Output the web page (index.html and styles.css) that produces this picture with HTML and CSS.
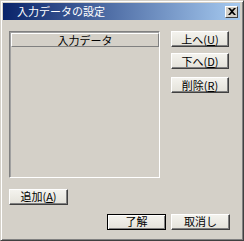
FILE: index.html
```html
<!DOCTYPE html>
<html lang="ja">
<head>
    <meta charset="UTF-8">
    <title>入力データの設定</title>
    <link rel="stylesheet" href="styles.css">
</head>
<body>
    <div class="window">
        <div class="titlebar">
            <span class="title">入力データの設定</span>
            <span class="close-btn">
                <svg width="8" height="7" viewBox="0 0 8 7">
                    <path d="M0 0h2l2 2 2-2h2L5 3.5 8 7H6L4 5 2 7H0l3-3.5z" fill="#000"/>
                </svg>
            </span>
        </div>

        <div class="content">
            <div class="main-row">
                <div class="listbox">
                    <div class="list-header">入力データ</div>
                    <div class="list-body"></div>
                </div>
                <div class="side-buttons">
                    <button class="btn">上へ(<u>U</u>)</button>
                    <button class="btn">下へ(<u>D</u>)</button>
                    <button class="btn btn-gap">削除(<u>R</u>)</button>
                </div>
            </div>

            <div class="add-row">
                <button class="btn">追加(<u>A</u>)</button>
            </div>

            <div class="footer">
                <button class="btn default">了解</button>
                <button class="btn">取消し</button>
            </div>
        </div>
    </div>
</body>
</html>
```

FILE: styles.css
```css
body {
    margin: 0;
    padding: 0;
    background: #d4d0c8;
    font-family: "Noto Sans CJK JP", "Liberation Sans", sans-serif;
    font-size: 11px;
}

.window {
    width: 244px;
    height: 241px;
    box-sizing: border-box;
    background: #d4d0c8;
    border-top: 1px solid #d4d0c8;
    border-left: 1px solid #d4d0c8;
    border-right: 1px solid #404040;
    border-bottom: 1px solid #404040;
    box-shadow: inset 1px 1px 0 #fff, inset -1px -1px 0 #808080;
    padding: 2px 3px 0 2px;
    display: flex;
    flex-direction: column;
}

.titlebar {
    height: 17px;
    display: flex;
    align-items: center;
    justify-content: space-between;
    padding: 0 2px 0 14px;
    background: linear-gradient(to right, #0a246a, #a6caf0);
    color: #fff;
}

.title {
    font-size: 11px;
    line-height: 17px;
}

.close-btn {
    width: 11px;
    height: 10px;
    display: flex;
    align-items: center;
    justify-content: center;
    background: #d4d0c8;
    border-top: 1px solid #fff;
    border-left: 1px solid #fff;
    border-right: 1px solid #404040;
    border-bottom: 1px solid #404040;
}

.content {
    padding: 11px 10px 0 6px;
    display: flex;
    flex-direction: column;
}

.main-row {
    display: flex;
    gap: 11px;
}

.listbox {
    width: 148px;
    height: 144px;
    border-top: 1px solid #808080;
    border-left: 1px solid #808080;
    border-right: 1px solid #fff;
    border-bottom: 1px solid #fff;
    box-shadow: inset 1px 1px 0 #a0a0a0;
    display: flex;
    flex-direction: column;
    padding: 1px 0 0 1px;
}

.list-header {
    height: 12px;
    line-height: 12px;
    text-align: center;
    background: #d4d0c8;
    border-top: 1px solid #fff;
    border-left: 1px solid #fff;
    border-right: 1px solid #808080;
    border-bottom: 1px solid #808080;
    color: #000;
}

.list-body {
    flex: 1;
}

.side-buttons {
    display: flex;
    flex-direction: column;
    gap: 6px;
}

.btn-gap {
    margin-top: 2px;
}

.btn {
    width: 58px;
    height: 16px;
    padding: 0;
    box-sizing: border-box;
    font-family: "Noto Sans CJK JP", "Liberation Sans", sans-serif;
    font-size: 11px;
    line-height: 13px;
    color: #000;
    background: linear-gradient(#f4f3ee, #e4e2da);
    border-top: 1px solid #fff;
    border-left: 1px solid #fff;
    border-right: 1px solid #404040;
    border-bottom: 1px solid #404040;
    box-shadow: inset -1px -1px 0 #808080;
}

.btn u {
    text-decoration: underline;
}

.add-row {
    margin-top: 10px;
}

.add-row .btn {
    width: 59px;
}

.footer {
    margin-top: 9px;
    display: flex;
    justify-content: flex-end;
    gap: 5px;
}

.footer .btn {
    width: 59px;
}

.btn.default {
    border: 1px solid #000;
    box-shadow: inset 1px 1px 0 #fff, inset -1px -1px 0 #808080;
}
```
